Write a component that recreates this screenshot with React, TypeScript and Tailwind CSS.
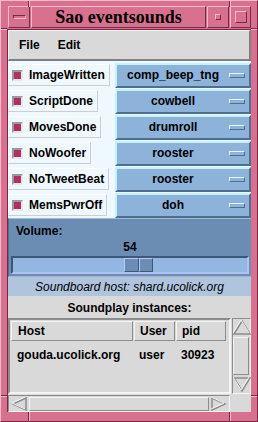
import React from 'react'

const events = [
  { name: 'ImageWritten', sound: 'comp_beep_tng' },
  { name: 'ScriptDone', sound: 'cowbell' },
  { name: 'MovesDone', sound: 'drumroll' },
  { name: 'NoWoofer', sound: 'rooster' },
  { name: 'NoTweetBeat', sound: 'rooster' },
  { name: 'MemsPwrOff', sound: 'doh' },
]

const sans = { fontFamily: '"Liberation Sans", Arial, sans-serif' }

function Arrow({ dir }: { dir: 'up' | 'down' | 'left' | 'right' }) {
  const pts = {
    up: '1,15 9,2 17,15',
    down: '1,2 9,15 17,2',
    left: '15,1 2,7 15,13',
    right: '2,1 15,7 2,13',
  }[dir]
  const vertical = dir === 'up' || dir === 'down'
  return (
    <svg width={vertical ? 18 : 17} height={vertical ? 17 : 14} className="block">
      <polygon points={pts} fill="#d9d9d9" stroke="#8c8c8c" strokeWidth="1.5" />
      <polyline points={pts} fill="none" stroke="#f4f4f4" strokeWidth="1" transform="translate(-1,-1)" />
    </svg>
  )
}

export default function App() {
  return (
    <div
      className="relative flex h-[422px] w-[258px] flex-col border-t border-l border-r border-b border-t-[#f6bccb] border-l-[#f6bccb] border-r-[#7a2848] border-b-[#7a2848] bg-[#d8708f] pt-[5px] pr-[6px] pb-[9px] pl-[6px]"
      style={sans}
    >
      {/* frame corner notches */}
      <div className="absolute top-0 left-[27px] h-[6px] w-[2px] border-l border-l-[#7a2848] bg-[#f6bccb]" />
      <div className="absolute top-0 left-[228px] h-[6px] w-[2px] border-l border-l-[#7a2848] bg-[#f6bccb]" />
      <div className="absolute bottom-0 left-[27px] h-[9px] w-[2px] border-l border-l-[#7a2848] bg-[#f6bccb]" />
      <div className="absolute bottom-0 left-[228px] h-[9px] w-[2px] border-l border-l-[#7a2848] bg-[#f6bccb]" />
      <div className="absolute top-[27px] left-0 h-[2px] w-[6px] border-t border-t-[#7a2848] bg-[#f6bccb]" />
      <div className="absolute top-[27px] right-0 h-[2px] w-[6px] border-t border-t-[#7a2848] bg-[#f6bccb]" />
      <div className="absolute bottom-[24px] left-0 h-[2px] w-[6px] border-t border-t-[#7a2848] bg-[#f6bccb]" />
      <div className="absolute bottom-[24px] right-0 h-[2px] w-[6px] border-t border-t-[#7a2848] bg-[#f6bccb]" />

      {/* title bar */}
      <div className="flex h-[23px] gap-[1px] pl-[1px]">
        <div className="flex w-[22px] items-center justify-center border border-t-[#f6bccb] border-l-[#f6bccb] border-r-[#7a2848] border-b-[#7a2848]">
          <div className="h-[4px] w-[13px] border border-t-[#7a2848] border-l-[#7a2848] border-r-[#f6bccb] border-b-[#f6bccb]" />
        </div>
        <div
          className="flex flex-1 items-center justify-center border border-t-[#f6bccb] border-l-[#f6bccb] border-r-[#7a2848] border-b-[#7a2848] text-[18px] leading-none font-bold text-black"
          style={{ fontFamily: '"Liberation Serif", "Times New Roman", serif' }}
        >
          Sao eventsounds
        </div>
        <div className="flex w-[22px] items-center justify-center border border-t-[#f6bccb] border-l-[#f6bccb] border-r-[#7a2848] border-b-[#7a2848]">
          <div className="h-[6px] w-[6px] border border-t-[#f6bccb] border-l-[#f6bccb] border-r-[#7a2848] border-b-[#7a2848]" />
        </div>
        <div className="flex w-[21px] items-center justify-center border border-t-[#f6bccb] border-l-[#f6bccb] border-r-[#7a2848] border-b-[#7a2848]">
          <div className="h-[12px] w-[12px] border border-t-[#f6bccb] border-l-[#f6bccb] border-r-[#7a2848] border-b-[#7a2848]" />
        </div>
      </div>

      {/* client area */}
      <div className="mt-[1px] flex flex-1 flex-col border-t border-l border-t-[#7a2848] border-l-[#7a2848] bg-[#d9d9d9]">
        {/* menu bar */}
        <div className="flex h-[31px] items-center gap-[18px] border-t border-l border-r-2 border-b-2 border-t-[#f4f4f4] border-l-[#f4f4f4] border-r-[#808080] border-b-[#808080] pl-[10px] text-[12px] font-bold text-black">
          <span>File</span>
          <span>Edit</span>
        </div>

        {/* event rows */}
        <div className="flex flex-col bg-[#f0f8ff] pt-[1px]">
          {events.map((ev) => (
            <div key={ev.name} className="flex h-[26px] items-center">
              <div className="flex w-[107px] items-center">
                <div className="flex h-[22px] items-center gap-[6px] border border-t-[#fbfdff] border-l-[#fbfdff] border-r-[#c9ced3] border-b-[#c9ced3] pr-[4px] pl-[3px]">
                  <div className="h-[11px] w-[11px] border-2 border-t-[#9a9a9a] border-l-[#9a9a9a] border-r-[#e8e8e8] border-b-[#e8e8e8] bg-[#b03060]" />
                  <span className="text-[12px] font-bold text-black">{ev.name}</span>
                </div>
              </div>
              <div className="flex h-[25px] flex-1 items-center border-2 border-t-[#c4f2ff] border-l-[#c4f2ff] border-r-[#4e6e90] border-b-[#4e6e90] bg-[#8db3da]">
                <span className="flex-1 text-center text-[12px] font-bold text-black">{ev.sound}</span>
                <div className="mr-[4px] h-[5px] w-[16px] border border-t-[#e4f8ff] border-l-[#e4f8ff] border-r-[#4e6e90] border-b-[#4e6e90] bg-[#8db3da]" />
              </div>
            </div>
          ))}
        </div>

        {/* volume */}
        <div className="flex h-[59px] flex-col border-t border-l border-b border-t-[#9fb8d3] border-l-[#4e6e90] border-b-[#9fb8d3] bg-[#6b8db4] px-[2px]">
          <div className="mt-[5px] pl-[5px] text-[12px] leading-[14px] font-bold text-black">Volume:</div>
          <div className="mt-[2px] text-center text-[12px] leading-[14px] font-bold text-black">54</div>
          <div className="mt-[2px] flex h-[18px] items-center border-2 border-t-[#3c5878] border-l-[#3c5878] border-r-[#b4c0f4] border-b-[#b4c0f4] bg-[#93b7e0] pl-[111px]">
            <div className="flex h-[14px] w-[29px]">
              <div className="flex-1 border border-t-[#b8c8f8] border-l-[#b8c8f8] border-r-[#3c5878] border-b-[#3c5878] bg-[#6b8db4]" />
              <div className="flex-1 border border-t-[#b8c8f8] border-l-[#b8c8f8] border-r-[#3c5878] border-b-[#3c5878] bg-[#6b8db4]" />
            </div>
          </div>
        </div>

        {/* host */}
        <div className="flex h-[19px] items-center justify-center bg-[#b0c4de] text-[12px] text-black italic">
          Soundboard host: shard.ucolick.org
        </div>

        {/* soundplay instances */}
        <div className="flex flex-1 flex-col">
          <div className="h-[22px] pt-[5px] text-center text-[12px] leading-[14px] font-bold text-black">
            Soundplay instances:
          </div>
          <div className="flex h-[76px]">
            <div className="flex flex-1 flex-col border-2 border-t-[#8c8c8c] border-l-[#8c8c8c] border-r-[#f4f4f4] border-b-[#f4f4f4] pt-[1px] pl-[1px]">
              <div className="flex h-[20px] gap-[1px] text-[12px] font-bold text-black">
                <div className="flex w-[122px] items-center border border-t-[#f4f4f4] border-l-[#f4f4f4] border-r-[#8c8c8c] border-b-[#8c8c8c] pl-[6px]">Host</div>
                <div className="flex w-[41px] items-center border border-t-[#f4f4f4] border-l-[#f4f4f4] border-r-[#8c8c8c] border-b-[#8c8c8c] pl-[5px]">User</div>
                <div className="flex w-[50px] items-center border border-t-[#f4f4f4] border-l-[#f4f4f4] border-r-[#8c8c8c] border-b-[#8c8c8c] pl-[5px]">pid</div>
              </div>
              <div className="mt-[5px] flex text-[12px] font-bold text-black">
                <div className="w-[123px] pl-[6px]">gouda.ucolick.org</div>
                <div className="w-[42px] pl-[5px]">user</div>
                <div className="pl-[5px]">30923</div>
              </div>
            </div>
            <div className="ml-[1px] flex w-[19px] flex-col border border-t-[#8c8c8c] border-l-[#8c8c8c] border-r-[#f4f4f4] border-b-[#f4f4f4] pr-[1px]">
              <Arrow dir="up" />
              <div className="my-[1px] flex-1 border border-t-[#f4f4f4] border-l-[#f4f4f4] border-r-[#8c8c8c] border-b-[#8c8c8c]" />
              <Arrow dir="down" />
            </div>
          </div>
          <div className="mt-[1px] flex h-[17px] w-[222px] items-center border border-t-[#8c8c8c] border-l-[#8c8c8c] border-r-[#f4f4f4] border-b-[#f4f4f4] px-[2px]">
            <Arrow dir="left" />
            <div className="mx-[1px] h-[14px] flex-1 border border-t-[#f4f4f4] border-l-[#f4f4f4] border-r-[#8c8c8c] border-b-[#8c8c8c]" />
            <Arrow dir="right" />
          </div>
        </div>
      </div>
    </div>
  )
}
